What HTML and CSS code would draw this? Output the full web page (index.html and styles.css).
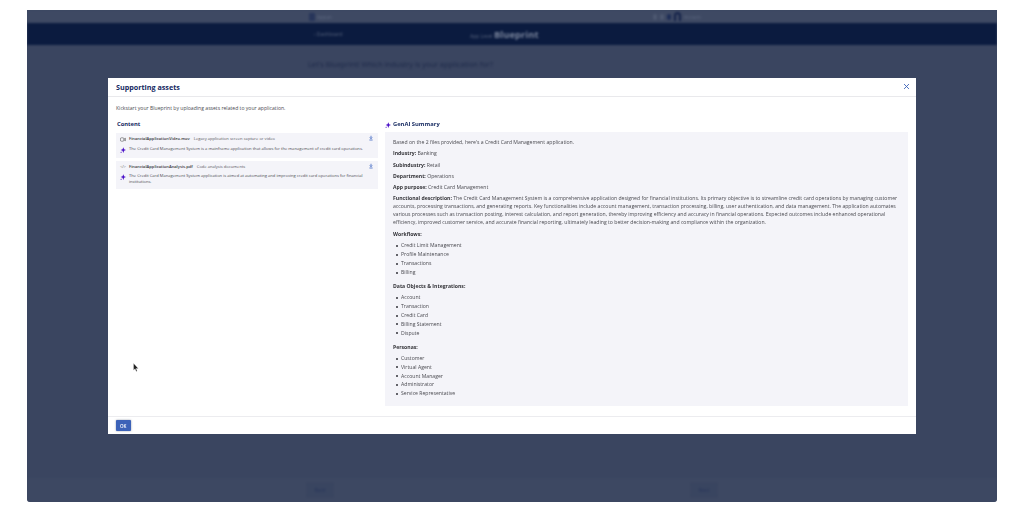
FILE: index.html
```html
<!DOCTYPE html>
<html lang="en">
<head>
<meta charset="utf-8">
<title>Supporting assets</title>
<link rel="stylesheet" href="styles.css">
</head>
<body>
<div class="screen">
  <div class="under">
    <div class="topbar">
      <span class="topbar-left"><i class="logo"></i><span>Appian</span></span>
      <span class="topbar-right"><i class="dot"></i><i class="dot"></i><i class="dot dark"></i><i class="avatar"></i><span>Account</span></span>
    </div>
    <div class="navbar">
      <span class="back">‹ Dashboard</span>
      <span class="brand"><small>App Level</small> <b>Blueprint</b></span>
    </div>
    <div class="question">Let's Blueprint! Which industry is your application for?</div>
    <div class="under-foot">
      <span class="ghost">Back</span>
      <span class="ghost">Next</span>
    </div>
  </div>

  <div class="modal">
    <header class="modal-head">
      <h1>Supporting assets</h1>
      <svg class="close" viewBox="0 0 10 10"><path d="M1.5 1.5l7 7M8.5 1.5l-7 7"/></svg>
    </header>
    <p class="intro">Kickstart your Blueprint by uploading assets related to your application.</p>
    <div class="cols">
      <section class="left">
        <h2>Content</h2>
        <div class="file">
          <div class="file-top">
            <svg class="ficon" viewBox="0 0 10 8"><rect x="0.7" y="1.2" width="5.8" height="5.6" rx="1.6"/><path d="M6.5 3.4l2.8-1.4v4l-2.8-1.4"/></svg>
            <b>FinancialApplicationVideo.mov</b><span class="kind">Legacy application screen capture or video</span>
            <svg class="dl" viewBox="0 0 8 10"><path d="M4 0.5v5.5M1.6 3.8L4 6.4l2.4-2.6M0.8 9h6.4"/></svg>
          </div>
          <div class="file-desc">
            <svg class="spark" viewBox="0 0 10 10"><path d="M5.5 0.6L6.8 3.9 10 5 6.8 6.1 5.5 9.8 4.2 6.1 1 5 4.2 3.9z"/><path d="M1.8 7.4l.5 1 1 .4-1 .4-.5 1-.5-1-1-.4 1-.4z"/></svg>
            <p>The Credit Card Management System is a mainframe application that allows for the management of credit card operations.</p>
          </div>
        </div>
        <div class="file">
          <div class="file-top">
            <span class="code">&lt;/&gt;</span>
            <b>FinancialApplicationAnalysis.pdf</b><span class="kind">Code analysis documents</span>
            <svg class="dl" viewBox="0 0 8 10"><path d="M4 0.5v5.5M1.6 3.8L4 6.4l2.4-2.6M0.8 9h6.4"/></svg>
          </div>
          <div class="file-desc">
            <svg class="spark" viewBox="0 0 10 10"><path d="M5.5 0.6L6.8 3.9 10 5 6.8 6.1 5.5 9.8 4.2 6.1 1 5 4.2 3.9z"/><path d="M1.8 7.4l.5 1 1 .4-1 .4-.5 1-.5-1-1-.4 1-.4z"/></svg>
            <p>The Credit Card Management System application is aimed at automating and improving credit card operations for financial institutions.</p>
          </div>
        </div>
      </section>
      <section class="right">
        <h2 class="ai-title"><svg class="spark" viewBox="0 0 10 10"><path d="M5.5 0.6L6.8 3.9 10 5 6.8 6.1 5.5 9.8 4.2 6.1 1 5 4.2 3.9z"/><path d="M1.8 7.4l.5 1 1 .4-1 .4-.5 1-.5-1-1-.4 1-.4z"/></svg>GenAI Summary</h2>
        <div class="summary">
          <p>Based on the 2 files provided, here's a Credit Card Management application.</p>
          <p><b>Industry:</b> Banking</p>
          <p><b>Subindustry:</b> Retail</p>
          <p><b>Department:</b> Operations</p>
          <p><b>App purpose:</b> Credit Card Management</p>
          <p class="long"><b>Functional description:</b> The Credit Card Management System is a comprehensive application designed for financial institutions. Its primary objective is to streamline credit card operations by managing customer accounts, processing transactions, and generating reports. Key functionalities include account management, transaction processing, billing, user authentication, and data management. The application automates various processes such as transaction posting, interest calculation, and report generation, thereby improving efficiency and accuracy in financial operations. Expected outcomes include enhanced operational efficiency, improved customer service, and accurate financial reporting, ultimately leading to better decision-making and compliance within the organization.</p>
          <p class="sub"><b>Workflows:</b></p>
          <ul>
            <li>Credit Limit Management</li>
            <li>Profile Maintenance</li>
            <li>Transactions</li>
            <li>Billing</li>
          </ul>
          <p class="sub"><b>Data Objects &amp; Integrations:</b></p>
          <ul>
            <li>Account</li>
            <li>Transaction</li>
            <li>Credit Card</li>
            <li>Billing Statement</li>
            <li>Dispute</li>
          </ul>
          <p class="sub"><b>Personas:</b></p>
          <ul>
            <li>Customer</li>
            <li>Virtual Agent</li>
            <li>Account Manager</li>
            <li>Administrator</li>
            <li>Service Representative</li>
          </ul>
        </div>
      </section>
    </div>
    <footer class="modal-foot"><button class="ok">OK</button></footer>
    <svg class="cursor" viewBox="0 0 6 9"><path d="M0.5 0.3v7l1.6-1.5 1.1 2.6 1-.5-1.1-2.5h2.2z"/></svg>
  </div>
</div>
</body>
</html>
```
FILE: styles.css
```css
* { box-sizing: border-box; }
html, body { margin: 0; padding: 0; background: #fff; }
body { height: 512px; overflow: hidden; font-family: "Open Sans", "Liberation Sans", sans-serif; color: #3c3c42; }
p, h1, h2, ul { margin: 0; padding: 0; }

.screen { position: relative; width: 970px; height: 492px; margin: 10px 0 0 27px; background: #3a4560; border-radius: 0 0 3px 3px; overflow: hidden; }
.under { display: flex; flex-direction: column; height: 100%; filter: blur(1px); }

.topbar { height: 13px; flex: none; display: flex; align-items: center; padding-left: 282px; background: #3e4963; font-size: 4.5px; color: #5f6a83; }
.topbar-left { display: flex; align-items: center; gap: 2px; width: 344px; }
.logo { width: 6px; height: 8px; background: #27355a; border-radius: 1px; }
.topbar-right { display: flex; align-items: center; gap: 3px; }
.dot { width: 4px; height: 6px; background: #4d5871; border-radius: 2px; }
.dot.dark { background: #1c2c56; }
.avatar { width: 7px; height: 9px; border: 2px solid #14224a; border-bottom: 0; border-radius: 4px 4px 0 0; }

.navbar { height: 22px; flex: none; display: flex; align-items: center; padding-left: 287px; background: #0b1b3f; color: #56627c; font-size: 5px; }
.back { width: 156px; }
.brand small { font-size: 5px; }
.brand b { font-size: 9.5px; color: #78839a; }

.question { flex: 1; padding: 14px 0 0 281px; font-size: 7.4px; color: #1c2848; }

.under-foot { height: 24px; flex: none; display: flex; align-items: center; padding-left: 280px; gap: 358px; background: #3d4862; }
.ghost { width: 26px; height: 14px; border-radius: 2px; background: #394560; color: #27345a; font-size: 5px; line-height: 14px; text-align: center; box-shadow: 0 0 2px #37425c; }

.modal { position: absolute; left: 81px; top: 68px; width: 808px; height: 356px; display: flex; flex-direction: column; background: #fff; filter: blur(0.3px); }
.modal-head { height: 19px; flex: none; display: flex; align-items: center; justify-content: space-between; padding: 0 6px 1px 8px; border-bottom: 1px solid #e9e9ec; }
.modal-head h1 { font-size: 7.2px; font-weight: 700; color: #14285f; }
.close { width: 7px; height: 7px; fill: none; stroke: #3c62b8; stroke-width: 1.3; }

.intro { flex: none; margin: 7px 0 0 8px; height: 8px; font-size: 5.1px; line-height: 8px; color: #4a4a50; }

.cols { flex: 1; min-height: 0; display: flex; gap: 7px; padding: 8px 8px 0 8px; }
.left { width: 262px; flex: none; }
.right { flex: 1; min-width: 0; }
h2 { font-size: 5.8px; font-weight: 700; color: #14285f; line-height: 9px; height: 9px; padding-left: 1px; }

.file { margin-top: 3px; min-height: 24px; padding: 1px 5px 5px 4px; background: #f4f4f9; font-size: 4.1px; line-height: 5.5px; }
.left h2 + .file { margin-top: 4px; }
.file-top { display: flex; align-items: center; height: 10px; }
.file-top b { font-weight: 600; color: #333338; margin-right: 4px; }
.kind { color: #55555b; }
.ficon { width: 6px; height: 5px; margin-right: 3px; flex: none; fill: none; stroke: #555; stroke-width: 1; }
.code { width: 9px; flex: none; font-size: 4px; color: #555; }
.dl { width: 4px; height: 6px; margin: -2px 0 0 auto; flex: none; fill: none; stroke: #3560c0; stroke-width: 1.5; }
.file-desc { display: flex; align-items: flex-start; padding-top: 1.5px; }
.file-desc .spark { margin: 1px 0 0 0; }
.file-desc p { flex: 1; padding-left: 3px; color: #4a4a50; }
.spark { width: 6px; height: 6px; flex: none; fill: #4a10c8; }

.ai-title { display: flex; align-items: center; gap: 2px; padding-left: 0; }

.summary { margin-top: 3px; height: 274px; padding: 7px 8px 0 8px; background: #f4f4f9; font-size: 5.13px; line-height: 8px; color: #4a4a50; }
.summary b { color: #333338; font-weight: 700; }
.summary p { margin-bottom: 3.3px; }
.summary .long { margin-bottom: 4px; }
.summary .sub { margin-bottom: 3px; }
.summary ul { list-style: none; padding-left: 8px; margin-bottom: 5.7px; }
.summary li { height: 8.8px; line-height: 8.8px; }
.summary li::before { content: ""; display: inline-block; width: 2px; height: 2px; margin: 0 3.5px 0 -5.5px; border-radius: 50%; background: #333338; vertical-align: middle; }

.modal-foot { height: 18px; flex: none; display: flex; align-items: center; padding: 0 8px; border-top: 1px solid #ececef; }
.ok { width: 14.5px; height: 11.5px; padding: 0; border: 0; border-radius: 1px; background: #3c62b8; color: #fff; font: 600 4.5px "Open Sans", sans-serif; box-shadow: 0 0 2px rgba(60,70,100,.6); }

.cursor { position: absolute; left: 25px; top: 285px; width: 6px; height: 9px; fill: #222; stroke: #fff; stroke-width: .3; }
```
